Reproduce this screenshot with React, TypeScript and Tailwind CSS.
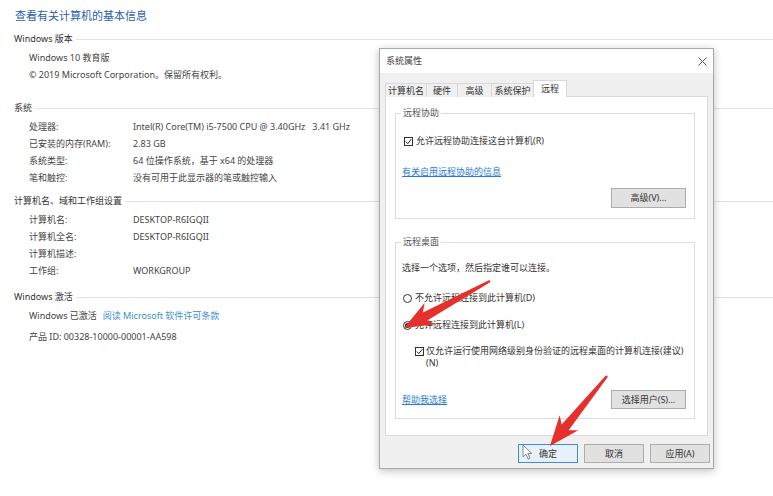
import React from "react";

const FONT = { fontFamily: '"Noto Sans", "Noto Sans CJK SC", sans-serif' };

const Heading = ({ title, className = "" }: { title: string; className?: string }) => (
  <div className={`flex items-center h-[17px] text-[9px] text-[#333] ${className}`}>
    <span>{title}</span>
    <div className="flex-1 h-px bg-[#e3e3e3] ml-[3px] mt-[2px]" />
  </div>
);

const Row = ({ label, value }: { label: string; value?: string }) => (
  <div className="flex items-center h-[17px] pl-[15px] text-[9px] text-[#444]">
    <span className="w-[104px] shrink-0">{label}</span>
    <span className="whitespace-pre">{value}</span>
  </div>
);

const Line = ({ text }: { text: string }) => (
  <div className="flex items-center h-[17px] pl-[15px] text-[9px] text-[#444] whitespace-nowrap">{text}</div>
);

const CheckBox = () => (
  <span className="w-[9px] h-[9px] border border-[#333] bg-white shrink-0 flex items-center justify-center">
    <svg width="7" height="7" viewBox="0 0 7 7">
      <path d="M0.8 3.6 L2.8 5.6 L6.3 1.2" fill="none" stroke="#222" strokeWidth="1" />
    </svg>
  </span>
);

const Radio = ({ checked }: { checked?: boolean }) => (
  <span className="w-[9px] h-[9px] rounded-full border border-[#333] bg-white shrink-0 flex items-center justify-center">
    {checked && <span className="w-[5px] h-[5px] rounded-full bg-[#222]" />}
  </span>
);

const WinButton = ({ label, focused }: { label: string; focused?: boolean }) => (
  <button
    className={`w-[60px] h-[19px] border text-[9px] text-[#333] flex items-center justify-center ${
      focused ? "border-[#3c8fdc] bg-[#e8f1fa]" : "border-[#adadad] bg-[#e1e1e1]"
    }`}
  >
    {label}
  </button>
);

// arrow polygon from tail to tip
const arrowPoints = (tx: number, ty: number, px: number, py: number) => {
  const len = Math.hypot(px - tx, py - ty);
  const dx = (px - tx) / len;
  const dy = (py - ty) / len;
  const nx = -dy;
  const ny = dx;
  const bx = px - dx * 30;
  const by = py - dy * 30;
  const jx = px - dx * 24;
  const jy = py - dy * 24;
  const pts = [
    [tx + nx * 1.2, ty + ny * 1.2],
    [jx + nx * 4.5, jy + ny * 4.5],
    [bx + nx * 12, by + ny * 12],
    [px, py],
    [bx - nx * 12, by - ny * 12],
    [jx - nx * 4.5, jy - ny * 4.5],
    [tx - nx * 1.2, ty - ny * 1.2],
  ];
  return pts.map((p) => p.join(",")).join(" ");
};

const tabs = [
  { label: "计算机名", w: "w-[42px]" },
  { label: "硬件", w: "w-[32px]" },
  { label: "高级", w: "w-[35px]" },
  { label: "系统保护", w: "w-[43px]" },
];

export default function App() {
  return (
    <div className="relative w-[773px] h-[496px] bg-white overflow-hidden" style={FONT}>
      {/* System page */}
      <div className="pl-[14px]">
        <div className="mt-[6px] h-[20px] flex items-center pl-[1px] text-[11px] text-[#2a5caa]">
          查看有关计算机的基本信息
        </div>

        <Heading title="Windows 版本" className="mt-[4px]" />
        <div className="mt-[2px]">
          <Line text="Windows 10 教育版" />
          <Line text="© 2019 Microsoft Corporation。保留所有权利。" />
        </div>

        <Heading title="系统" className="mt-[16px]" />
        <div className="mt-[2px]">
          <Row label="处理器:" value="Intel(R) Core(TM) i5-7500 CPU @ 3.40GHz   3.41 GHz" />
          <Row label="已安装的内存(RAM):" value="2.83 GB" />
          <Row label="系统类型:" value="64 位操作系统，基于 x64 的处理器" />
          <Row label="笔和触控:" value="没有可用于此显示器的笔或触控输入" />
        </div>

        <Heading title="计算机名、域和工作组设置" className="mt-[6px]" />
        <div className="mt-[2px]">
          <Row label="计算机名:" value="DESKTOP-R6IGQII" />
          <Row label="计算机全名:" value="DESKTOP-R6IGQII" />
          <Row label="计算机描述:" />
          <Row label="工作组:" value="WORKGROUP" />
        </div>

        <Heading title="Windows 激活" className="mt-[9px]" />
        <div className="mt-[2px] flex items-center h-[17px] pl-[15px] text-[9px] text-[#444]">
          <span>Windows 已激活</span>
          <span className="ml-[6px] text-[#3c8cd4]">阅读 Microsoft 软件许可条款</span>
        </div>
        <div className="mt-[4px] flex items-center h-[17px] pl-[15px] text-[9px] text-[#444]">
          产品 ID: 00328-10000-00001-AA598
        </div>
      </div>

      {/* System properties dialog */}
      <div className="absolute left-[379px] top-[48px] w-[335px] h-[421px] border border-[#a8a8a8] bg-[#f0f0f0] shadow-[0_2px_8px_rgba(0,0,0,0.25)] flex flex-col">
        <div className="h-[24px] bg-white flex items-center justify-between pl-[6px] pr-[6px] text-[9px] text-[#444]">
          <span>系统属性</span>
          <svg width="9" height="9" viewBox="0 0 9 9">
            <path d="M0.5 0.5 L8.5 8.5 M8.5 0.5 L0.5 8.5" stroke="#555" strokeWidth="1" />
          </svg>
        </div>

        <div className="px-[5px] pt-[7px] flex flex-col">
          {/* tabs */}
          <div className="flex items-end h-[17px] relative z-10">
            {tabs.map((t) => (
              <div
                key={t.label}
                className={`${t.w} h-[14px] border border-b-0 border-[#d9d9d9] -mr-px bg-[#f0f0f0] flex items-center justify-center text-[9px] text-[#333]`}
              >
                {t.label}
              </div>
            ))}
            <div className="w-[34px] h-[17px] border border-b-0 border-[#d9d9d9] bg-white flex items-center justify-center text-[9px] text-[#333]">
              远程
            </div>
          </div>

          {/* tab panel */}
          <div className="h-[340px] -mt-px border border-[#d9d9d9] bg-white pl-[9px] pr-[12px] pt-[10px] text-[9px] text-[#333]">
            <fieldset className="border border-[#dcdcdc] pl-[5px] pr-[8px] pb-[10px]">
              <legend className="px-[2px] leading-[12px] text-[#555]">远程协助</legend>
              <div className="mt-[15px] h-[14px] flex items-center gap-[3px] pl-[3px]">
                <CheckBox />
                <span>允许远程协助连接这台计算机(R)</span>
              </div>
              <div className="mt-[17px] h-[14px] flex items-center pl-[1px]">
                <span className="text-[#2a7ad6] underline">有关启用远程协助的信息</span>
              </div>
              <div className="mt-[9px] flex justify-end">
                <button className="w-[75px] h-[20px] border border-[#adadad] bg-[#e1e1e1] text-[9px] text-[#333]">
                  高级(V)...
                </button>
              </div>
            </fieldset>

            <fieldset className="mt-[17px] border border-[#dcdcdc] pl-[5px] pr-[8px] pb-[9px]">
              <legend className="px-[2px] leading-[12px] text-[#555]">远程桌面</legend>
              <div className="mt-[13px] h-[14px] flex items-center pl-[1px]">
                选择一个选项，然后指定谁可以连接。
              </div>
              <div className="mt-[16px] h-[14px] flex items-center gap-[3px] pl-[2px]">
                <Radio />
                <span>不允许远程连接到此计算机(D)</span>
              </div>
              <div className="mt-[13px] h-[14px] flex items-center gap-[3px] pl-[2px]">
                <Radio checked />
                <span>允许远程连接到此计算机(L)</span>
              </div>
              <div className="mt-[13px] flex items-start gap-[2px] pl-[14px]">
                <span className="mt-[2px]">
                  <CheckBox />
                </span>
                <span className="leading-[12px]">
                  仅允许运行使用网络级别身份验证的远程桌面的计算机连接(建议)
                  <br />
                  (N)
                </span>
              </div>
              <div className="mt-[21px] flex items-center justify-between pl-[1px]">
                <span className="text-[#2a7ad6] underline">帮助我选择</span>
                <button className="w-[75px] h-[19px] border border-[#adadad] bg-[#e1e1e1] text-[9px] text-[#333]">
                  选择用户(S)...
                </button>
              </div>
            </fieldset>
          </div>

          {/* dialog buttons */}
          <div className="mt-[8px] -mr-[2px] flex justify-end gap-[6px]">
            <WinButton label="确定" focused />
            <WinButton label="取消" />
            <WinButton label="应用(A)" />
          </div>
        </div>
      </div>

      {/* mouse pointer */}
      <svg className="absolute left-[522px] top-[444px]" width="12" height="16" viewBox="0 0 12 16">
        <path
          d="M1 1 L1 13 L4 10.2 L6.2 15 L8 14.2 L5.8 9.5 L9.8 9.5 Z"
          fill="#fff"
          stroke="#8a8a8a"
          strokeWidth="1"
          strokeLinejoin="round"
        />
      </svg>

      {/* red annotation arrows */}
      <svg className="absolute inset-0 pointer-events-none" width="773" height="496" viewBox="0 0 773 496">
        <polygon points={arrowPoints(490, 281, 404, 328)} fill="#e5302c" />
        <polygon points={arrowPoints(607, 376, 550, 446)} fill="#e5302c" />
      </svg>
    </div>
  );
}
